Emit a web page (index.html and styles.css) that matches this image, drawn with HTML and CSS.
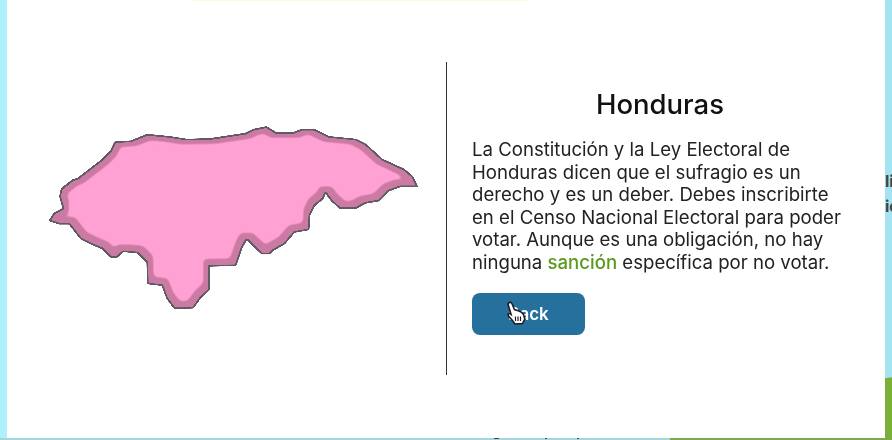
FILE: index.html
```html
<!DOCTYPE html>
<html>
    <head>
        <meta charset="utf-8">
        <meta name="viewport" content="initial-scale=1, width=device-width">
        <title>Honduras</title>
        <link rel="stylesheet" href="styles.css">
    </head>
    <body>
        <div class="scene">
            <div class="gutter-left"></div>
            <main class="modal">
                <div class="top-strip"></div>
                <div class="modal-body">
                    <section class="map-panel">
                        <svg class="map" viewBox="0 0 439 440" width="439" height="438">
                            <defs>
                                <path id="honduras" d="M48.3 221.7L53.3 214L62.3 209.3L59 197.3L60.7 189.3L71.7 180.7L76.7 179.3L101.7 160L110 151.7L114.3 142.7L130 141.7L146.7 135L170 137.3L186.7 140L210 139.3L245 134L253.3 130L266.7 127.3L276.7 133.3L293.3 133.3L301.7 130L315 130L330 137.3L356.7 140L366.7 145L383.3 160L405 170L413.3 176.7L418.3 187.3L401.7 187.3L390 191.7L380 201.7L366.7 204L356.7 209.3L340 209.3L331.7 201.7L326 194L323.3 200L315 206.7L310 216.7L309.3 230.7L295 233.3L285 245L273.3 251.7L270 255L261.7 255L246.7 240.7L241.7 250L236 266.7L209.3 267.3L209.3 291L200 300L193.3 309.3L174 310L166.7 300L161.7 286.7L147.3 285L146.7 264L136.7 254L123.3 252.7L116.7 258.3L110 258.3L101.7 250L90 245L80 240L68.3 225L58.3 225Z"/>
                                <filter id="soft-line" color-interpolation-filters="sRGB">
                                    <feGaussianBlur stdDeviation="0.8"/>
                                    <feComponentTransfer>
                                        <feFuncA type="linear" slope="4" intercept="-1.2"/>
                                    </feComponentTransfer>
                                </filter>
                                <filter id="soft-band" color-interpolation-filters="sRGB">
                                    <feMorphology operator="erode" radius="1.3"/>
                                    <feGaussianBlur stdDeviation="0.8"/>
                                    <feComponentTransfer>
                                        <feFuncA type="linear" slope="4" intercept="-1.5"/>
                                    </feComponentTransfer>
                                </filter>
                                <filter id="soft-fill" color-interpolation-filters="sRGB">
                                    <feMorphology operator="erode" radius="5.6"/>
                                    <feOffset dx="0.5" dy="-1"/>
                                    <feGaussianBlur stdDeviation="2"/>
                                    <feComponentTransfer>
                                        <feFuncA type="linear" slope="3" intercept="-1"/>
                                    </feComponentTransfer>
                                </filter>
                            </defs>
                            <use href="#honduras" class="land-line"/>
                            <use href="#honduras" class="land-band"/>
                            <use href="#honduras" class="land-fill"/>
                        </svg>
                    </section>
                    <div class="divider"></div>
                    <section class="info-panel">
                        <h1>Honduras</h1>
                        <p>La Constitución y la Ley Electoral de Honduras dicen que el sufragio es un derecho y es un deber. Debes inscribirte en el Censo Nacional Electoral para poder votar. Aunque es una obligación, no hay ninguna <span class="term">sanción</span> específica por no votar.</p>
                        <button type="button" class="back">
                            Back
                            <svg class="cursor" viewBox="0 0 20 24" width="20" height="24">
                                <path d="M3.5 1.5C4.7 1 5.7 1.8 6.1 3L8.5 8.5L13 10C15 10.7 16.5 11.8 17.5 13.5L18.8 18L16.5 22.5L9 23L6 19L2.5 15C1.5 13.5 2.4 12.2 4 12.6L5 13.4L2.1 3.6C1.9 2.7 2.5 1.9 3.5 1.5Z" fill="#fff" stroke="#1c1c1c" stroke-width="1.6"/>
                                <path d="M9.5 15.5V20M12 15.5V20M14.5 15.5V20" stroke="#1c1c1c" stroke-width="1.2"/>
                            </svg>
                        </button>
                    </section>
                </div>
            </main>
            <div class="gutter-right">
                <span>li</span>
                <span>id</span>
            </div>
        </div>
        <div class="ground">
            <div class="ground-sky"></div>
            <div class="ground-grass"></div>
        </div>
    </body>
</html>
```

FILE: styles.css
```css
html, body {
    margin: 0;
    height: 100%;
}
body {
    width: 892px;
    height: 440px;
    overflow: hidden;
    display: flex;
    flex-direction: column;
    background-color: #aef1fd;
    font-family: "Inter", "Liberation Sans", sans-serif;
    color: #222222;
}
.scene {
    display: flex;
    height: 438px;
}
.gutter-left {
    width: 7px;
    flex-shrink: 0;
}
.modal {
    width: 878px;
    flex-shrink: 0;
    background-color: #ffffff;
    display: flex;
    flex-direction: column;
}
.top-strip {
    height: 1px;
    width: 334px;
    margin-left: 186px;
    background-color: #fafcd6;
}
.modal-body {
    flex: 1;
    display: flex;
    align-items: flex-start;
}
.map-panel {
    width: 439px;
    height: 437px;
    margin-top: -1px;
}
.map {
    display: block;
    margin-left: -7px;
    filter: blur(0.4px);
}
.land-line {
    fill: #615b66;
    stroke: #615b66;
    stroke-width: 1;
    stroke-linejoin: round;
    filter: url(#soft-line);
}
.land-band {
    fill: #cb7aa4;
    filter: url(#soft-band);
}
.land-fill {
    fill: #ffa1d2;
    filter: url(#soft-fill);
}
.divider {
    width: 1px;
    height: 313px;
    margin-top: 61px;
    background-color: #333333;
    flex-shrink: 0;
}
.info-panel {
    width: 380px;
    margin-left: 25px;
    padding-top: 86px;
    filter: blur(0.3px);
}
h1 {
    margin: 0 0 17px 0;
    width: 376px;
    font-size: 27.5px;
    line-height: 34px;
    font-weight: 500;
    text-align: center;
    color: #111111;
}
p {
    margin: 0;
    font-size: 18.6px;
    line-height: 22.6px;
}
.term {
    color: #5a9a1e;
    font-weight: 500;
}
.back {
    position: relative;
    display: block;
    width: 113px;
    height: 42px;
    margin-top: 19px;
    padding: 0;
    border: 0;
    border-radius: 8px;
    background-color: #25709d;
    color: #ffffff;
    font-family: inherit;
    font-size: 17px;
    font-weight: 600;
}
.cursor {
    position: absolute;
    left: 34px;
    top: 8px;
}
.gutter-right {
    flex: 1;
    overflow: hidden;
    display: flex;
    flex-direction: column;
    gap: 6px;
    padding-top: 172px;
    background: linear-gradient(172deg, #a5e3f0 374px, #7cae3a 375px);
    font-size: 16px;
    line-height: 19px;
    font-weight: 700;
    color: #3a474c;
}
.gutter-right span {
    display: block;
}
.ground {
    flex: 1;
    display: flex;
}
.ground-sky {
    width: 670px;
    background-color: #a5d6dc;
    background-image:
        linear-gradient(#444444, #444444),
        linear-gradient(#444444, #444444),
        linear-gradient(#444444, #444444);
    background-repeat: no-repeat;
    background-size: 5px 1px, 2px 1px, 2px 1px;
    background-position: 494px 0, 545px 0, 577px 0;
}
.ground-grass {
    flex: 1;
    background-color: #7fa84a;
}
```
